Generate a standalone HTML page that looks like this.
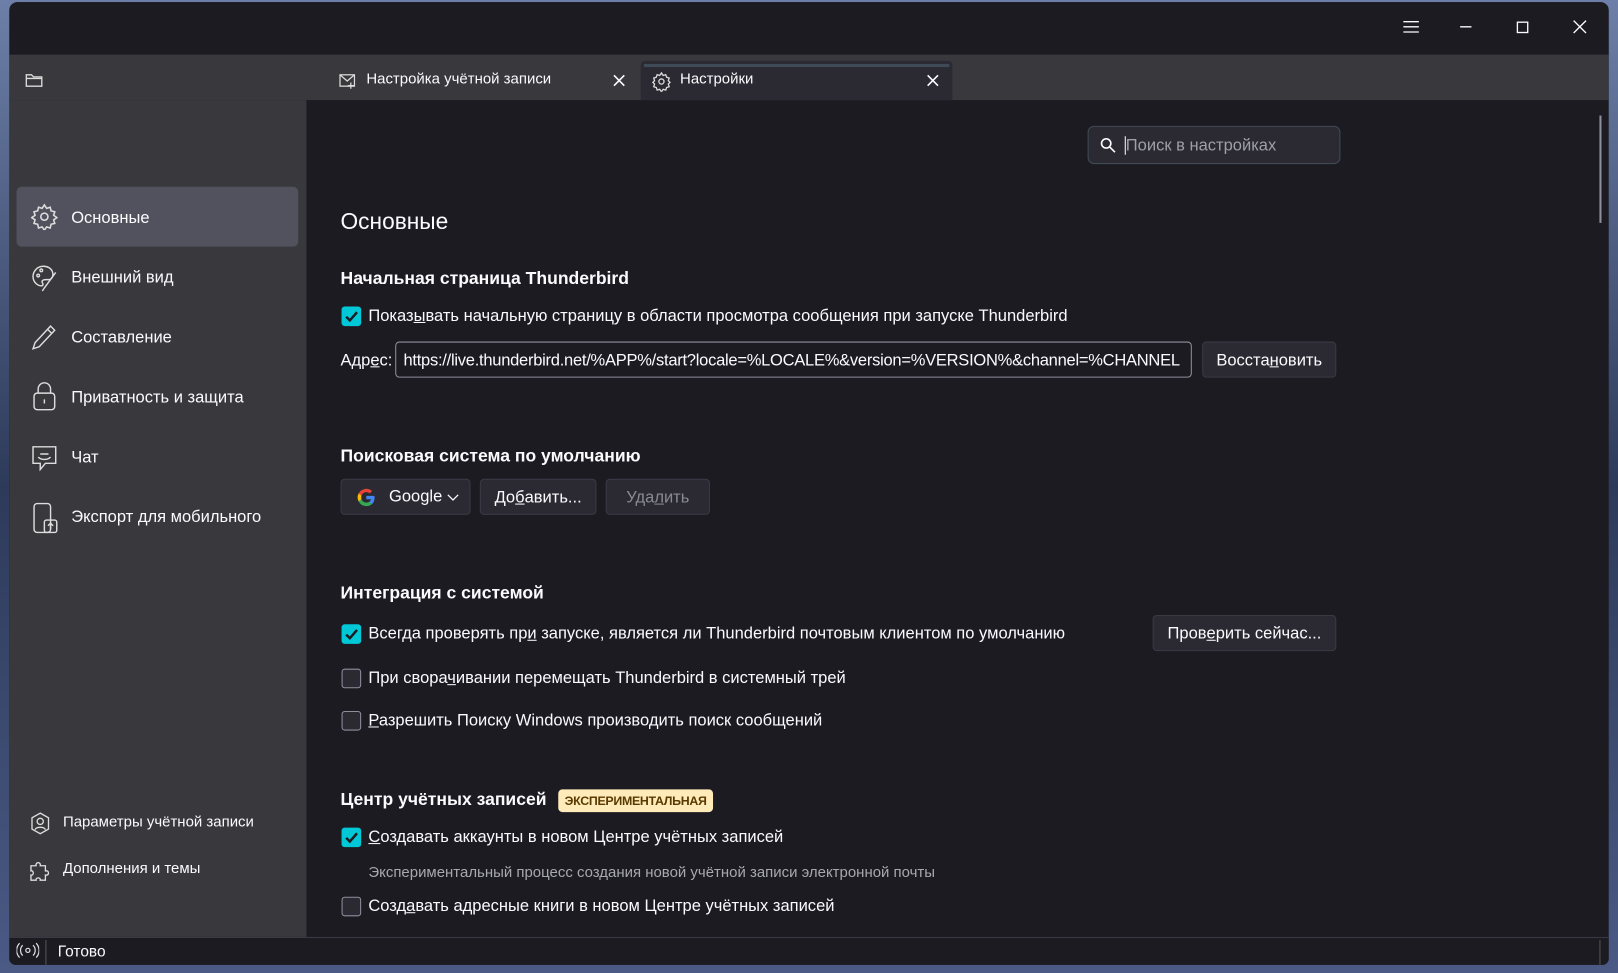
<!DOCTYPE html>
<html><head><meta charset="utf-8">
<style>
*{box-sizing:border-box;margin:0;padding:0}
html,body{width:1618px;height:973px;overflow:hidden;background:#3b4a6a}
body{font-family:"Liberation Sans","Noto Sans CJK SC",sans-serif;color:#fbfbfe}
#bg{position:absolute;left:0;top:0;width:1618px;height:973px;background:linear-gradient(180deg,#6d7fa8 0%,#2d3a5a 50%,#4a5a85 100%)}
#s{position:absolute;left:0;top:0;width:1568px;height:943px;transform:scale(1.03189);transform-origin:0 0}
.a{position:absolute}
.win{left:9px;top:2px;width:1550px;height:933px;background:#1c1b22;border-radius:8px 8px 6px 6px;overflow:hidden}
.t{font-size:16px;white-space:nowrap}
.h{font-size:17px;font-weight:bold;white-space:nowrap}
.cb{width:19px;height:19px;border-radius:3px}
.on{background:#00c8d7}
.off{border:1px solid #8f8f9d;background:#2b2a33}
.btn{background:#2b2a33;border:1px solid #3a3944;border-radius:4px;font-size:16px;display:flex;align-items:center;justify-content:center}
.nav{font-size:16px;white-space:nowrap}
u{text-decoration:underline}
</style></head><body>
<div id="bg"></div>
<div id="s">
<div class="a win">
 <div class="a" style="left:0;top:0;width:1550px;height:51px;background:#1c1b22"></div>
 <svg class="a" style="left:1350px;top:16px" width="200" height="20" viewBox="0 0 200 20" fill="none" stroke="#fbfbfe" stroke-width="1.3">
  <path d="M1 3h15M1 8h15M1 13h15"/><path d="M56 8h11"/><rect x="111.5" y="3.5" width="10" height="10"/><path d="M166 2l12 12M178 2l-12 12"/>
 </svg>
 <div class="a" style="left:0;top:51px;width:1550px;height:44px;background:#38383d"></div>
 <svg class="a" style="left:15px;top:68px" width="18" height="16" viewBox="0 0 18 16" fill="none" stroke="#ddd" stroke-width="1.3"><path d="M1.5 2.5h5l2 2h8v9h-15z M1.5 6h15"/></svg>
 <svg class="a" style="left:319px;top:67px" width="18" height="18" viewBox="0 0 18 18" fill="none" stroke="#ddd" stroke-width="1.2"><rect x="1.5" y="3.5" width="14" height="11"/><path d="M1.5 3.5l7 6 7-6M12 11v6M9 14h6"/></svg>
 <div class="a t" style="left:346px;top:67px;font-size:14.5px">Настройка учётной записи</div>
 <svg class="a" style="left:584px;top:69px" width="14" height="14" fill="none" stroke="#fbfbfe" stroke-width="1.6"><path d="M2 2l10 10M12 2L2 12"/></svg>
 <div class="a" style="left:612px;top:57px;width:302px;height:38px;background:#2b2a33;border-radius:4px 4px 0 0"></div>
 <div class="a" style="left:615px;top:60px;width:296px;height:3px;background:#3e4a55"></div>
 <svg class="a" style="left:622px;top:67px" width="20" height="20" viewBox="0 0 24 24" fill="none" stroke="#ddd" stroke-width="1.5"><circle cx="12" cy="12" r="3"/><path d="M12 2l2 3 3-1 1 3 3 1-1 3 2 2-2 2 1 3-3 1-1 3-3-1-2 3-2-3-3 1-1-3-3-1 1-3-2-2 2-2-1-3 3-1 1-3 3 1z"/></svg>
 <div class="a t" style="left:650px;top:67px;font-size:14.5px">Настройки</div>
 <svg class="a" style="left:888px;top:69px" width="14" height="14" fill="none" stroke="#fbfbfe" stroke-width="1.6"><path d="M2 2l10 10M12 2L2 12"/></svg>
 <div class="a" style="left:0;top:95px;width:288px;height:812px;background:#38383d"></div>
 <div class="a" style="left:7px;top:179px;width:273px;height:58px;background:#52525e;border-radius:5px"></div>
 <svg class="a" style="left:21px;top:195px" width="26" height="26" viewBox="0 0 24 24" fill="none" stroke="#ddd" stroke-width="1.4"><circle cx="12" cy="12" r="3.2"/><path d="M12 1.5l2 3 3.2-1 .8 3.3 3.3.8-1 3.2 3 2-3 2 1 3.2-3.3.8-.8 3.3-3.2-1-2 3-2-3-3.2 1-.8-3.3-3.3-.8 1-3.2-3-2 3-2-1-3.2 3.3-.8.8-3.3 3.2 1z"/></svg>
 <div class="a nav" style="left:60px;top:201px">Основные</div>
 <svg class="a" style="left:21px;top:253px" width="26" height="28" viewBox="0 0 26 28" fill="none" stroke="#ddd" stroke-width="1.4"><path d="M12 3c-6 0-10 5-10 10 0 6 5 9 8 9 2 0 2-2 1-3-1-2 1-3 3-3h3c3 0 5-3 4-7-1-4-5-6-9-6z"/><circle cx="7" cy="12" r="1.3"/><circle cx="10" cy="7" r="1.3"/><path d="M24 9L13 24l-2 3"/></svg>
 <div class="a nav" style="left:60px;top:259px">Внешний вид</div>
 <svg class="a" style="left:21px;top:311px" width="26" height="28" viewBox="0 0 26 28" fill="none" stroke="#ddd" stroke-width="1.4"><path d="M19 3l4 4L8 23l-6 2 2-6z M16 6l4 4"/></svg>
 <div class="a nav" style="left:60px;top:317px">Составление</div>
 <svg class="a" style="left:22px;top:367px" width="24" height="30" viewBox="0 0 24 30" fill="none" stroke="#ddd" stroke-width="1.4"><rect x="2" y="12" width="20" height="16" rx="3"/><path d="M6 12V8a6 6 0 0112 0v4M12 18v4"/></svg>
 <div class="a nav" style="left:60px;top:375px">Приватность и защита</div>
 <svg class="a" style="left:20px;top:428px" width="28" height="30" viewBox="0 0 28 30" fill="none" stroke="#ddd" stroke-width="1.4"><path d="M3 3h22v16H15l-5 6v-6H3z"/><path d="M10 10h8M8 13c3 3 9 3 12 0"/></svg>
 <div class="a nav" style="left:60px;top:433px">Чат</div>
 <svg class="a" style="left:22px;top:484px" width="28" height="34" viewBox="0 0 28 34" fill="none" stroke="#ddd" stroke-width="1.4"><rect x="2" y="2" width="16" height="28" rx="3"/><rect x="12" y="18" width="12" height="12" rx="2"/><path d="M18 27v-6M15.5 23.5L18 21l2.5 2.5"/></svg>
 <div class="a nav" style="left:60px;top:491px">Экспорт для мобильного</div>
 <svg class="a" style="left:20px;top:785px" width="20" height="22" viewBox="0 0 20 22" fill="none" stroke="#ddd" stroke-width="1.3"><path d="M10 1l8 4.5v11L10 21l-8-4.5v-11z"/><circle cx="10" cy="9" r="3"/><path d="M5 17c1-3 9-3 10 0"/></svg>
 <div class="a t" style="left:52px;top:787px;font-size:14.5px">Параметры учётной записи</div>
 <svg class="a" style="left:19px;top:830px" width="22" height="22" viewBox="0 0 22 22" fill="none" stroke="#ddd" stroke-width="1.3"><path d="M2 7h5c-1-4 5-4 4 0h5v5c4-1 4 5 0 4v5h-5c1-3-5-3-4 0H2v-5c3 1 3-5 0-4z"/></svg>
 <div class="a t" style="left:52px;top:832px;font-size:14.5px">Дополнения и темы</div>
 <div class="a" style="left:1541px;top:110px;width:2px;height:104px;background:#8f8f9d"></div>
 <div class="a" style="left:1045px;top:120px;width:245px;height:37px;background:#2b2a33;border:1px solid #3f4a55;border-radius:6px"></div>
 <svg class="a" style="left:1057px;top:131px" width="16" height="16" fill="none" stroke="#fbfbfe" stroke-width="1.6"><circle cx="6" cy="6" r="4.5"/><path d="M9.5 9.5l5 5"/></svg>
 <div class="a" style="left:1081px;top:130px;width:1px;height:18px;background:#fbfbfe"></div>
 <div class="a t" style="left:1082px;top:131px;color:#9f9fa8">Поиск в настройках</div>
 <div class="a" style="left:321px;top:200px;font-size:22px;font-weight:300">Основные</div>
 <div class="a h" style="left:321px;top:258px">Начальная страница Thunderbird</div>
 <div class="a cb on" style="left:322px;top:295px"></div>
 <svg class="a" style="left:322px;top:295px" width="19" height="19" fill="none" stroke="#1c1b22" stroke-width="2.4"><path d="M4.5 10l3.5 3.5 7-8"/></svg>
 <div class="a t" style="left:348px;top:296px">Показ<u>ы</u>вать начальную страницу в области просмотра сообщения при запуске Thunderbird</div>
 <div class="a t" style="left:321px;top:339px">Адр<u>е</u>с:</div>
 <div class="a" style="left:374px;top:329px;width:772px;height:35px;background:#1c1b22;border:1px solid #8f8f9d;border-radius:4px;overflow:hidden"><div class="t" style="padding:9px 7px;letter-spacing:-0.25px">https://live.thunderbird.net/%APP%/start?locale=%LOCALE%&amp;version=%VERSION%&amp;channel=%CHANNEL</div></div>
 <div class="a btn" style="left:1156px;top:329px;width:130px;height:35px;padding-top:2px">Восста<u>н</u>овить</div>
 <div class="a h" style="left:321px;top:430px">Поисковая система по умолчанию</div>
 <div class="a btn" style="left:321px;top:462px;width:126px;height:35px;justify-content:flex-start;padding-left:14px">
  <svg width="20" height="20" viewBox="0 0 20 20"><path d="M18 10.2c0-.6-.1-1.2-.2-1.7H10v3.3h4.5a4 4 0 01-1.7 2.6v2.2h2.7c1.6-1.5 2.5-3.7 2.5-6.4z" fill="#4285f4"/><path d="M10 18.5c2.3 0 4.2-.8 5.5-2.1l-2.7-2.1c-.7.5-1.700.8-2.8.8-2.2 0-4-1.5-4.7-3.4H2.5v2.2A8.5 8.5 0 0010 18.5z" fill="#34a853"/><path d="M5.3 11.7a5 5 0 010-3.3V6.2H2.5a8.5 8.5 0 000 7.6z" fill="#fbbc05"/><path d="M10 4.9c1.2 0 2.3.4 3.2 1.3l2.4-2.4A8.5 8.5 0 002.5 6.2l2.8 2.2C6 6.4 7.8 4.9 10 4.9z" fill="#ea4335"/></svg>
  <span style="margin-left:12px">Google</span><svg style="margin-left:4px" width="12" height="8" fill="none" stroke="#fbfbfe" stroke-width="1.2"><path d="M1 1.5l5 5 5-5"/></svg></div>
 <div class="a btn" style="left:456px;top:462px;width:113px;height:35px;padding-top:2px">До<u>б</u>авить...</div>
 <div class="a btn" style="left:578px;top:462px;width:101px;height:35px;color:#8a8a92;padding-top:2px">Уда<u>л</u>ить</div>
 <div class="a h" style="left:321px;top:563px">Интеграция с системой</div>
 <div class="a cb on" style="left:322px;top:603px"></div>
 <svg class="a" style="left:322px;top:603px" width="19" height="19" fill="none" stroke="#1c1b22" stroke-width="2.4"><path d="M4.5 10l3.5 3.5 7-8"/></svg>
 <div class="a t" style="left:348px;top:604px">Всегда проверять пр<u>и</u> запуске, является ли Thunderbird почтовым клиентом по умолчанию</div>
 <div class="a btn" style="left:1108px;top:594px;width:178px;height:35px;padding-top:2px">Пров<u>е</u>рить сейчас...</div>
 <div class="a cb off" style="left:322px;top:646px"></div>
 <div class="a t" style="left:348px;top:647px">При свора<u>ч</u>ивании перемещать Thunderbird в системный трей</div>
 <div class="a cb off" style="left:322px;top:687px"></div>
 <div class="a t" style="left:348px;top:688px"><u>Р</u>азрешить Поиску Windows производить поиск сообщений</div>
 <div class="a h" style="left:321px;top:763px">Центр учётных записей</div>
 <div class="a" style="left:532px;top:763px;width:150px;height:22px;background:#ffebb9;border-radius:4px;color:#5a3a00;font-size:12px;font-weight:bold;text-align:center;line-height:22px;letter-spacing:-0.3px">ЭКСПЕРИМЕНТАЛЬНАЯ</div>
 <div class="a cb on" style="left:322px;top:800px"></div>
 <svg class="a" style="left:322px;top:800px" width="19" height="19" fill="none" stroke="#1c1b22" stroke-width="2.4"><path d="M4.5 10l3.5 3.5 7-8"/></svg>
 <div class="a t" style="left:348px;top:801px"><u>С</u>оздавать аккаунты в новом Центре учётных записей</div>
 <div class="a t" style="left:348px;top:836px;font-size:14.5px;color:#a8a8b0">Экспериментальный процесс создания новой учётной записи электронной почты</div>
 <div class="a cb off" style="left:322px;top:867px"></div>
 <div class="a t" style="left:348px;top:868px">Созд<u>а</u>вать адресные книги в новом Центре учётных записей</div>
 <div class="a" style="left:0;top:906px;width:1550px;height:27px;background:#1c1b22;border-top:1px solid #3a3944"></div>
 <svg class="a" style="left:7px;top:911px" width="22" height="16" viewBox="0 0 22 16" fill="none" stroke="#ddd" stroke-width="1.2"><circle cx="11" cy="8" r="2"/><path d="M6 3a7 7 0 000 10M16 3a7 7 0 010 10M3 1a10 10 0 000 14M19 1a10 10 0 010 14"/></svg>
 <div class="a" style="left:35px;top:909px;width:1px;height:24px;background:#555"></div>
 <div class="a t" style="left:47px;top:912px;font-size:15px">Готово</div>
 <div class="a" style="left:1541px;top:909px;width:1px;height:24px;background:#555"></div>
</div>
</div>
</body></html>
